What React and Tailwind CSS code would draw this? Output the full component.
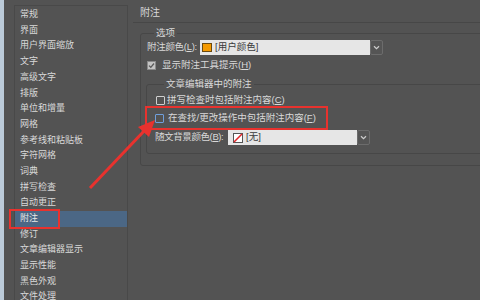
import React from 'react';

const navItems = [
  '常规', '界面', '用户界面缩放', '文字', '高级文字', '排版', '单位和增量', '网格',
  '参考线和粘贴板', '字符网格', '词典', '拼写检查', '自动更正', '附注', '修订',
  '文章编辑器显示', '显示性能', '黑色外观', '文件处理',
];

const Chevron = () => (
  <svg width="7" height="5" viewBox="0 0 7 5">
    <path d="M1 1.2 L3.5 3.6 L6 1.2" fill="none" stroke="#cfcfcf" strokeWidth="1.2" />
  </svg>
);

const Checkbox = ({ checked, focused }) => (
  <span
    className={
      checked
        ? 'w-[9px] h-[9px] shrink-0 bg-[#c4c4c4] border border-[#8a8a8a] flex items-center justify-center'
        : focused
        ? 'w-[9px] h-[9px] shrink-0 border border-[#6f9fdc] rounded-[1px]'
        : 'w-[9px] h-[9px] shrink-0 border border-[#cfcfcf] rounded-[1px]'
    }
  >
    {checked && (
      <svg width="7" height="7" viewBox="0 0 7 7">
        <path d="M1 3.6 L2.8 5.3 L6 1.5" fill="none" stroke="#5a5a5a" strokeWidth="1.3" />
      </svg>
    )}
  </span>
);

const Dropdown = ({ width, swatch, label }) => (
  <div className="flex h-[15px] shrink-0">
    <div className={`${width} bg-[#e6e6e6] flex items-center gap-[3px] pl-[2px] text-[#3a3a3a]`}>
      {swatch}
      <span>{label}</span>
    </div>
    <div className="w-[13px] border border-[#6c6c6c] rounded-[2px] bg-[#555] flex items-center justify-center">
      <Chevron />
    </div>
  </div>
);

export default function App() {
  return (
    <div className="relative w-[480px] h-[300px] overflow-hidden bg-[#535353] flex text-[#d9d9d9] font-['Liberation_Sans','Noto_Sans_CJK_SC',sans-serif]">
      <div className="w-[4px] shrink-0 bg-[#bccbd9]" />

      {/* sidebar */}
      <div className="ml-[10px] mt-[5px] w-[114px] shrink-0 border border-b-0 border-[#494949] pt-[1px] text-[9px]">
        {navItems.map((item) => (
          <div
            key={item}
            className={
              item === '附注'
                ? 'h-[15.7px] flex items-center pl-[5px] bg-[#4b6785] text-[#e8e8e8]'
                : 'h-[15.7px] flex items-center pl-[5px]'
            }
          >
            {item}
          </div>
        ))}
      </div>

      {/* main panel */}
      <div className="flex-1 text-[9.5px]">
        <div className="pl-[12px] pt-[6px] h-[22px] text-[10px] leading-[14px]">附注</div>
        <div className="ml-[5px] border-t border-[#474747]" />

        <fieldset className="ml-[12px] mt-[3px] w-[350px] border border-[#474747] rounded-[3px] pl-[6px] pb-[11px]">
          <legend className="ml-[7px] px-[2px] h-[14px] leading-[14px]">选项</legend>

          <div className="flex items-center h-[15px]">
            <span className="w-[53px] shrink-0 whitespace-nowrap tracking-[-0.3px]">附注颜色(<u>L</u>):</span>
            <Dropdown
              width="w-[170px]"
              label="[用户颜色]"
              swatch={<span className="w-[10px] h-[9px] bg-[#f59a00] border border-[#6b4a10]" />}
            />
          </div>

          <div className="flex items-center gap-[6px] h-[15px] mt-[3px]">
            <Checkbox checked />
            <span>显示附注工具提示(<u>H</u>)</span>
          </div>

          <fieldset className="-ml-[1px] mt-[4px] border border-[#474747] rounded-[3px] pl-[9px] pb-[8px]">
            <legend className="ml-[8px] px-[2px] h-[14px] leading-[14px]">文章编辑器中的附注</legend>

            <div className="flex items-center gap-[2px] h-[15px] mt-[2px]">
              <Checkbox />
              <span>拼写检查时包括附注内容(<u>C</u>)</span>
            </div>

            <div className="flex items-center gap-[4px] h-[15px] mt-[3px] -ml-[1px]">
              <Checkbox focused />
              <span>在查找/更改操作中包括附注内容(<u>F</u>)</span>
            </div>

            <div className="flex items-center h-[15px] mt-[4px] -ml-[1px]">
              <span className="w-[73px] shrink-0 whitespace-nowrap tracking-[-0.4px]">随文背景颜色(<u>B</u>):</span>
              <Dropdown
                width="w-[129px]"
                label="[无]"
                swatch={
                  <svg width="10" height="10" viewBox="0 0 10 10" className="ml-[3px]">
                    <rect x="0.5" y="0.5" width="9" height="9" fill="#fff" stroke="#555" />
                    <path d="M1 9 L9 1" stroke="#e0262a" strokeWidth="1.6" />
                  </svg>
                }
              />
            </div>
          </fieldset>
        </fieldset>
      </div>

      {/* annotation overlays */}
      <div className="absolute left-[9px] top-[209px] w-[51px] h-[20px] border-2 border-[#e8322e]" />
      <div className="absolute left-[145px] top-[106px] w-[183px] h-[24px] border-2 border-[#e8322e]" />
      <svg className="absolute left-0 top-0" width="480" height="300" viewBox="0 0 480 300">
        <line x1="90" y1="188" x2="145" y2="130" stroke="#e8322e" strokeWidth="3" />
        <polygon points="155,120 149,137 138,127" fill="#e8322e" />
      </svg>
    </div>
  );
}
